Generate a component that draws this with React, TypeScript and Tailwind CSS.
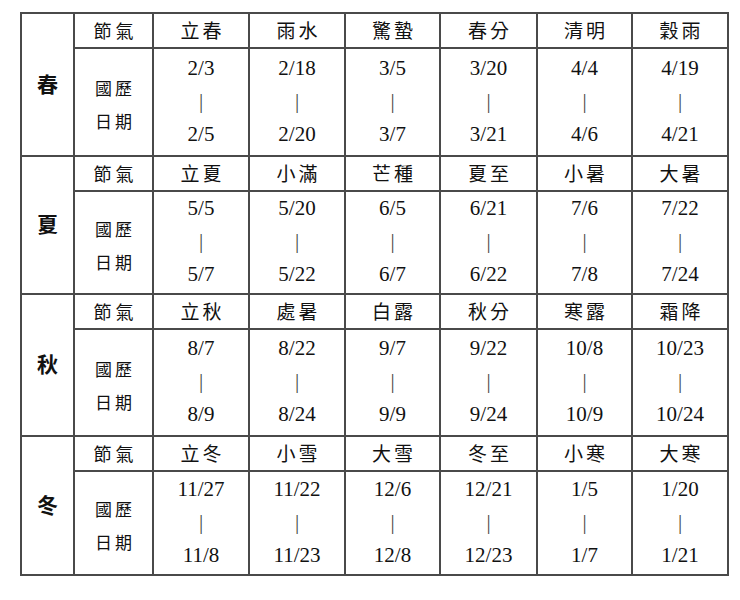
import { Fragment } from 'react';

const seasons = [
  {
    name: '春',
    body: 'h-[108px]',
    terms: ['立春', '雨水', '驚蟄', '春分', '清明', '穀雨'],
    dates: [['2/3', '2/5'], ['2/18', '2/20'], ['3/5', '3/7'], ['3/20', '3/21'], ['4/4', '4/6'], ['4/19', '4/21']],
  },
  {
    name: '夏',
    body: 'h-[103px]',
    terms: ['立夏', '小滿', '芒種', '夏至', '小暑', '大暑'],
    dates: [['5/5', '5/7'], ['5/20', '5/22'], ['6/5', '6/7'], ['6/21', '6/22'], ['7/6', '7/8'], ['7/22', '7/24']],
  },
  {
    name: '秋',
    body: 'h-[107px]',
    terms: ['立秋', '處暑', '白露', '秋分', '寒露', '霜降'],
    dates: [['8/7', '8/9'], ['8/22', '8/24'], ['9/7', '9/9'], ['9/22', '9/24'], ['10/8', '10/9'], ['10/23', '10/24']],
  },
  {
    name: '冬',
    body: 'h-[104px]',
    terms: ['立冬', '小雪', '大雪', '冬至', '小寒', '大寒'],
    dates: [['11/27', '11/8'], ['11/22', '11/23'], ['12/6', '12/8'], ['12/21', '12/23'], ['1/5', '1/7'], ['1/20', '1/21']],
  },
];

const cjk = "font-['Noto_Sans_CJK_TC','Noto_Sans_CJK_SC',sans-serif]";
const serif = "font-['Liberation_Serif','Times_New_Roman',serif]";
const cell = 'border-2 border-[#4a4a4a] p-0 text-center align-middle';

export default function App() {
  return (
    <div className="min-h-[600px] w-[740px] bg-white pt-[12px] pl-[20px] text-[#111]">
      <table className="w-[707px] table-fixed border-collapse border-2 border-[#333]">
        <colgroup>
          <col className="w-[53px]" />
          <col className="w-[79px]" />
          <col className="w-[96px]" />
          <col className="w-[96px]" />
          <col className="w-[95px]" />
          <col className="w-[97px]" />
          <col className="w-[95px]" />
          <col className="w-[96px]" />
        </colgroup>
        <tbody>
          {seasons.map((s) => (
            <Fragment key={s.name}>
              <tr className="h-[35px]">
                <td rowSpan={2} className={`${cell} ${cjk} pb-[2px] text-[21px] font-bold`}>
                  {s.name}
                </td>
                <td className={`${cell} ${cjk} pl-[4px] text-[18px] tracking-[4px]`}>節氣</td>
                {s.terms.map((t) => (
                  <td key={t} className={`${cell} ${cjk} pl-[3px] text-[19px] tracking-[3px]`}>
                    {t}
                  </td>
                ))}
              </tr>
              <tr className={s.body}>
                <td className={`${cell} ${cjk} pt-[4px] pl-[3px] text-[17px] leading-[33px] tracking-[3px]`}>
                  <div>國歷</div>
                  <div>日期</div>
                </td>
                {s.dates.map(([a, b]) => (
                  <td key={a} className={`${cell} ${serif} pb-[2px] text-[21px] leading-[33px]`}>
                    <div>{a}</div>
                    <div className="text-[#444]">|</div>
                    <div>{b}</div>
                  </td>
                ))}
              </tr>
            </Fragment>
          ))}
        </tbody>
      </table>
    </div>
  );
}
